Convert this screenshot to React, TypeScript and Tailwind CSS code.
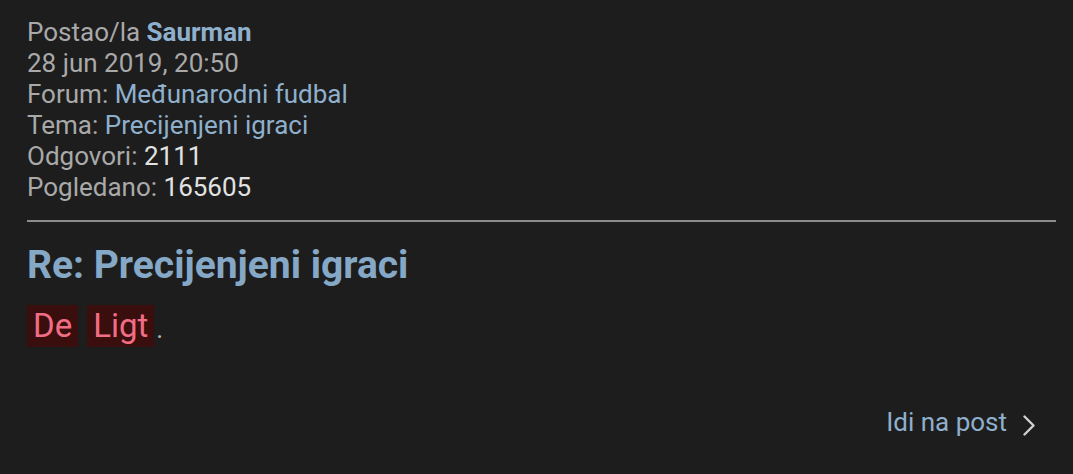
import React from "react";

export default function App() {
  return (
    <div className="w-[1073px] h-[474px] bg-[#1d1d1d] overflow-hidden" style={{ fontFamily: "Roboto, 'Noto Sans', sans-serif" }}>
      <div className="pl-[27px] pr-[17px] pt-[17px]">
        <div className="text-[26px] leading-[31px] text-[#a9a9a9]">
          <div>Postao/la <span className="font-bold text-[#8fb0cc]">Saurman</span></div>
          <div>28 jun 2019, 20:50</div>
          <div>Forum: <span className="text-[#8fb0cc]">Međunarodni fudbal</span></div>
          <div>Tema: <span className="text-[#8fb0cc]">Precijenjeni igraci</span></div>
          <div>Odgovori: <span className="text-[#e2e2e2]">2111</span></div>
          <div>Pogledano: <span className="text-[#e2e2e2]">165605</span></div>
        </div>
        <div className="mt-[17px] h-[2px] bg-[#8c8c8c]" />
        <div className="mt-[20px] text-[39px] leading-[46px] font-bold text-[#86a8c7]">Re: Precijenjeni igraci</div>
        <div className="mt-[17px] flex items-end text-[33px] leading-[42px] text-[#f06d86]">
          <span className="bg-[#3a0e0c] px-[6px] h-[42px]">De</span>
          <span className="bg-[#3a0e0c] px-[6px] h-[42px] ml-[9px]">Ligt</span>
          <span className="text-[#b8b8b8] ml-[2px] text-[26px] leading-[36px]">.</span>
        </div>
        <div className="mt-[60px] flex justify-end items-start text-[26px] leading-[31px] text-[#8fb0cc]">
          <span>Idi na post</span>
          <svg className="ml-[16px] mr-[21px] mt-[8px]" width="12" height="21" viewBox="0 0 12 21" fill="none" stroke="#d0d0d0" strokeWidth="2.4" strokeLinecap="round" strokeLinejoin="round">
            <path d="M1.5 1.5 L10.5 10.5 L1.5 19.5" />
          </svg>
        </div>
      </div>
    </div>
  );
}
